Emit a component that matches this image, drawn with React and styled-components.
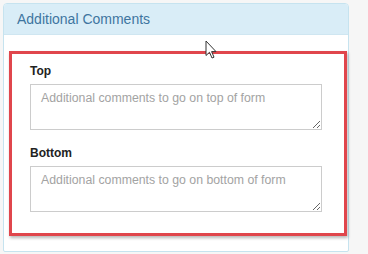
import React from "react";
import styled, { createGlobalStyle } from "styled-components";

const Global = createGlobalStyle`
  html, body { margin: 0; padding: 0; background: #f6f6f6; }
  body { font-family: "Liberation Sans", Arial, sans-serif; }
  * { box-sizing: border-box; }
`;

const Page = styled.div`
  position: relative;
  width: 368px;
  height: 254px;
  padding: 3px 19px 0 3px;
`;

const Panel = styled.section`
  width: 346px;
  height: 249px;
  background: #fff;
  border: 1px solid #c6e3ef;
  border-radius: 4px 4px 2px 2px;
  display: flex;
  flex-direction: column;
`;

const Header = styled.header`
  height: 32px;
  background: #d9edf7;
  border-bottom: 1px solid #cfe6f1;
  border-radius: 3px 3px 0 0;
  padding: 0 13px;
  display: flex;
  align-items: center;
  color: #3e75a0;
  font-size: 14px;
`;

const Body = styled.div`
  padding: 16px 1px 15px 5px;
`;

const Highlight = styled.div`
  border: 3px solid #e0464c;
  box-shadow: 1px 2px 3px rgba(0, 0, 0, 0.28);
  padding: 9px 22px 21px 18px;
  display: flex;
  flex-direction: column;
`;

const Label = styled.label`
  display: block;
  font-size: 12px;
  font-weight: bold;
  line-height: 17px;
  color: #222;
  margin-top: ${(p) => (p.$first ? "0" : "15px")};
  margin-bottom: 4px;
`;

const Area = styled.textarea`
  display: block;
  width: 292px;
  height: 46px;
  border: 1px solid #cccccc;
  border-radius: 0;
  padding: 4px 10px;
  font-family: "Liberation Sans", Arial, sans-serif;
  font-size: 12.3px;
  line-height: 18px;
  color: #555;
  background: #fff;
  resize: both;
  outline: none;
  &::placeholder { color: #a3a3a3; }
`;

const Cursor = styled.svg`
  position: absolute;
  left: 205px;
  top: 40px;
  width: 13px;
  height: 20px;
`;

export default function App() {
  return (
    <>
      <Global />
      <Page>
        <Panel>
          <Header>Additional Comments</Header>
          <Body>
            <Highlight>
              <Label $first>Top</Label>
              <Area placeholder="Additional comments to go on top of form" />
              <Label>Bottom</Label>
              <Area placeholder="Additional comments to go on bottom of form" />
            </Highlight>
          </Body>
        </Panel>
        <Cursor viewBox="0 0 13 20">
          <path
            d="M1 1 L1 15.5 L4.5 12.3 L7 18 L9 17.2 L6.6 11.6 L11 11.6 Z"
            fill="#fff"
            stroke="#333"
            strokeWidth="1"
            strokeLinejoin="round"
          />
        </Cursor>
      </Page>
    </>
  );
}
